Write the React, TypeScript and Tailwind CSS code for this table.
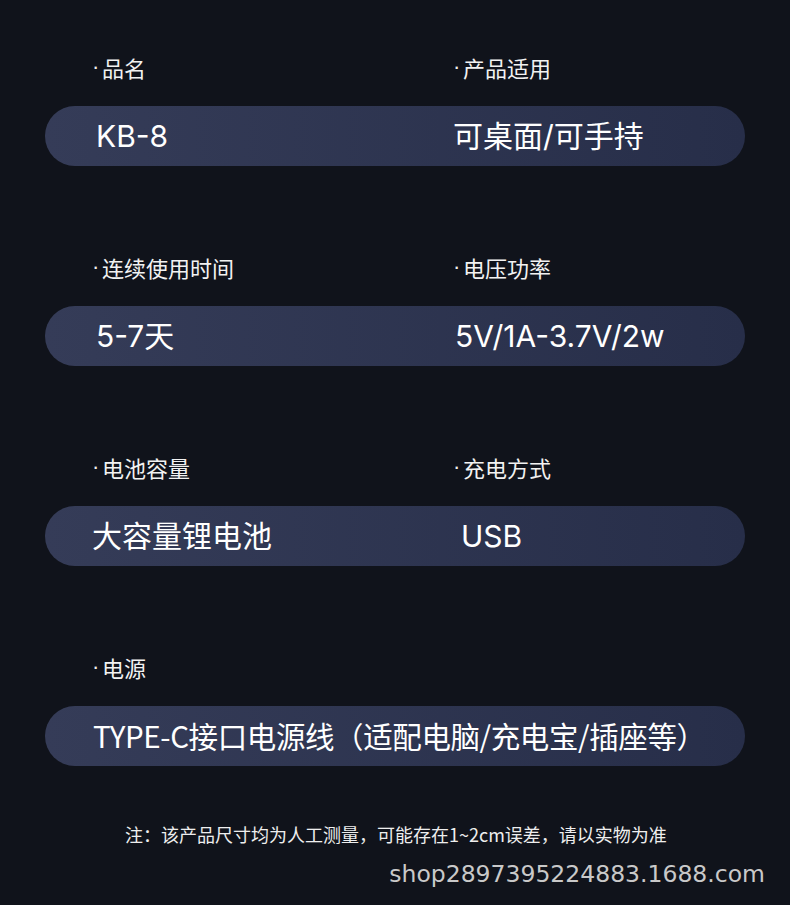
const rows: { label: [string, string?]; value: [string, string?]; leftPad?: string; rightPad?: string }[] = [
  { label: ["品名", "产品适用"], value: ["KB-8", "可桌面/可手持"], leftPad: "pl-[51px]", rightPad: "-ml-[2px]" },
  { label: ["连续使用时间", "电压功率"], value: ["5-7天", "5V/1A-3.7V/2w"], leftPad: "pl-[51px]" },
  { label: ["电池容量", "充电方式"], value: ["大容量锂电池", "USB"], leftPad: "pl-[47px]", rightPad: "pl-[6px]" },
  { label: ["电源"], value: ["TYPE-C接口电源线（适配电脑/充电宝/插座等）"], leftPad: "pl-[48px]" },
];

const latin = { fontFamily: 'Inter, "Noto Sans CJK SC", sans-serif' };

function Label({ text }: { text: string }) {
  return (
    <div className="flex items-center">
      <span className="inline-block w-[10px]" style={{ fontFamily: '"Liberation Sans", sans-serif' }}>
        ·
      </span>
      {text}
    </div>
  );
}

export default function App() {
  return (
    <div
      className="w-[790px] h-[905px] bg-[#10131b] text-white overflow-hidden"
      style={{ fontFamily: '"Noto Sans CJK SC", "Noto Sans", sans-serif' }}
    >
      <div className="pt-[52px] px-[45px]">
        {rows.map((row, i) => {
          const single = !row.value[1];
          return (
            <div key={i} className={i > 0 ? "mt-[86px]" : ""}>
              {/* labels */}
              <div className="flex h-[30px] items-center text-[22px] leading-[30px] text-[#f2f2f2]">
                <div className="w-[408px] pl-[47px]">
                  <Label text={row.label[0]} />
                </div>
                {row.label[1] && <Label text={row.label[1]} />}
              </div>
              {/* pill */}
              <div className="mt-[24px] h-[60px] rounded-full bg-gradient-to-r from-[#353c58] to-[#272e49] flex items-center text-[30px] leading-none">
                <div
                  className={`${single ? "whitespace-nowrap text-[29.5px] tracking-[-0.4px]" : "w-[410px] shrink-0"} ${row.leftPad}`}
                  style={single ? undefined : latin}
                >
                  {row.value[0]}
                </div>
                {row.value[1] && (
                  <div className={row.rightPad ?? ""} style={latin}>
                    {row.value[1]}
                  </div>
                )}
              </div>
            </div>
          );
        })}
      </div>

      <div className="mt-[54px] pl-[125px] text-[18px] leading-[28px] text-[#eeeeee]">
        注：该产品尺寸均为人工测量，可能存在1~2cm误差，请以实物为准
      </div>
      <div
        className="mt-[11px] pr-[25px] text-right text-[23.5px] leading-[30px] text-[#c9c9c9]"
        style={{ fontFamily: '"DejaVu Sans", sans-serif' }}
      >
        shop2897395224883.1688.com
      </div>
    </div>
  );
}
